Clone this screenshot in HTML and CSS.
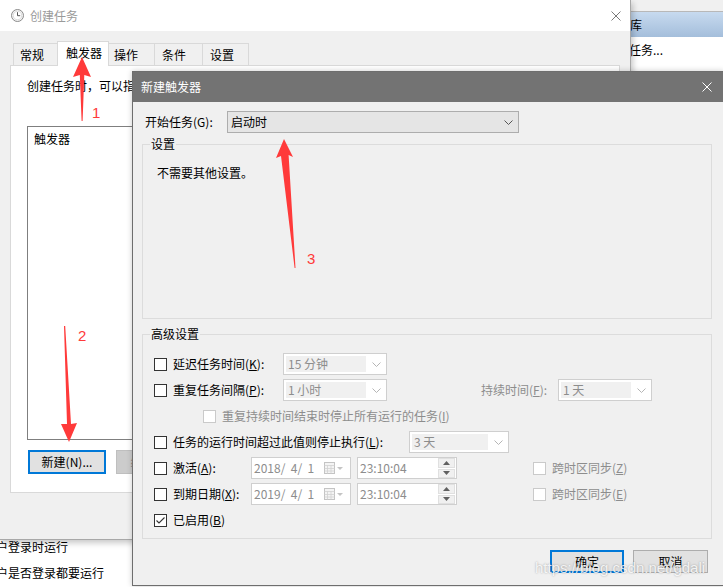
FILE: index.html
```html
<!DOCTYPE html>
<html lang="zh-CN">
<head>
<meta charset="utf-8">
<title>新建触发器</title>
<link rel="stylesheet" href="styles.css">
</head>
<body>
<div class="desk">
  <div class="app-right">
    <div class="app-top"></div>
    <div class="app-head">库</div>
    <div class="app-item">任务...</div>
  </div>
  <div class="app-bottom">
    <div>户登录时运行</div>
    <div>户是否登录都要运行</div>
  </div>

  <div class="win back">
    <div class="titlebar">
      <svg class="clock" width="13" height="13" viewBox="0 0 13 13"><circle cx="6.5" cy="6.5" r="6" fill="#f2f2f2" stroke="#8a8a8a"/><circle cx="6.5" cy="6.5" r="4.2" fill="#fff" stroke="#c9c9c9" stroke-width=".6"/><path d="M6.5 3.2V6.7H9.2" fill="none" stroke="#555" stroke-width="1"/></svg>
      <span class="title">创建任务</span>
      <svg class="close" width="10" height="10" viewBox="0 0 10 10"><path d="M0.5 0.5L9.5 9.5M9.5 0.5L0.5 9.5" stroke="#7a7a7a" stroke-width="1"/></svg>
    </div>
    <div class="tabs">
      <div class="tab first t1">常规</div>
      <div class="tab sel t2">触发器</div>
      <div class="tab t3">操作</div>
      <div class="tab t4">条件</div>
      <div class="tab t5">设置</div>
    </div>
    <div class="panel">
      <div class="intro">创建任务时，可以指定触发任务的条件。</div>
      <div class="list"><div class="list-item">触发器</div></div>
      <div class="btnrow">
        <div class="btn focus">新建(N)...</div>
        <div class="btn disabled">编辑(E)...</div>
      </div>
    </div>
  </div>

  <div class="win front">
    <div class="dtitle">
      <span class="title">新建触发器</span>
      <svg class="close" width="10" height="10" viewBox="0 0 10 10"><path d="M0.5 0.5L9.5 9.5M9.5 0.5L0.5 9.5" stroke="#fff" stroke-width="1"/></svg>
    </div>
    <div class="dbody">
      <div class="startrow">
        <span class="start-lbl">开始任务(G):</span>
        <div class="combo main">
          <span class="val">启动时</span>
          <svg class="chev" width="9" height="5" viewBox="0 0 9 5"><path d="M0.5 0.5L4.5 4.5L8.5 0.5" fill="none" stroke="#555"/></svg>
        </div>
      </div>

      <fieldset class="group g1">
        <legend>设置</legend>
        <div class="note">不需要其他设置。</div>
      </fieldset>

      <fieldset class="group g2">
        <legend>高级设置</legend>
        <div class="rows">
          <div class="row">
            <span class="cb"></span>
            <span class="lbl w1">延迟任务时间(<u>K</u>):</span>
            <div class="combo dis w-104"><span class="val">15 分钟</span><span class="chev-box"><svg width="9" height="5" viewBox="0 0 9 5"><path d="M0.5 0.5L4.5 4.5L8.5 0.5" fill="none" stroke="#b5b5b5"/></svg></span></div>
          </div>
          <div class="row">
            <span class="cb"></span>
            <span class="lbl w1">重复任务间隔(<u>P</u>):</span>
            <div class="combo dis w-104"><span class="val">1 小时</span><span class="chev-box"><svg width="9" height="5" viewBox="0 0 9 5"><path d="M0.5 0.5L4.5 4.5L8.5 0.5" fill="none" stroke="#b5b5b5"/></svg></span></div>
            <span class="lbl gray dur">持续时间(<u>F</u>):</span>
            <div class="combo dis w-94"><span class="val">1 天</span><span class="chev-box"><svg width="9" height="5" viewBox="0 0 9 5"><path d="M0.5 0.5L4.5 4.5L8.5 0.5" fill="none" stroke="#b5b5b5"/></svg></span></div>
          </div>
          <div class="row sub">
            <span class="cb off"></span>
            <span class="gray">重复持续时间结束时停止所有运行的任务(<u>I</u>)</span>
          </div>
          <div class="row">
            <span class="cb"></span>
            <span class="lbl w4">任务的运行时间超过此值则停止执行(<u>L</u>):</span>
            <div class="combo dis w-100"><span class="val">3 天</span><span class="chev-box"><svg width="9" height="5" viewBox="0 0 9 5"><path d="M0.5 0.5L4.5 4.5L8.5 0.5" fill="none" stroke="#b5b5b5"/></svg></span></div>
          </div>
          <div class="row">
            <span class="cb"></span>
            <span class="lbl w5">激活(<u>A</u>):</span>
            <div class="datebox">
              <span class="dval">2018/&nbsp; 4/&nbsp; 1</span>
              <svg class="cal" width="20" height="12" viewBox="0 0 20 12"><rect x="0.5" y="0.5" width="10" height="11" fill="#f4f4f4" stroke="#c4c4c4"/><path d="M0.5 3.5H10.5M0.5 6.5H10.5M0.5 9H10.5M3.5 3.5V11.5M7 3.5V11.5" stroke="#d2d2d2" stroke-width=".8"/><path d="M13 5H19L16 8Z" fill="#c4c4c4"/></svg>
            </div>
            <div class="timebox">
              <span class="dval">23:10:04</span>
              <span class="spin"><span class="sp"><svg width="7" height="4" viewBox="0 0 7 4"><path d="M0 4H7L3.5 0Z" fill="#606060"/></svg></span><span class="sp"><svg width="7" height="4" viewBox="0 0 7 4"><path d="M0 0H7L3.5 4Z" fill="#606060"/></svg></span></span>
            </div>
            <span class="cb off tz"></span>
            <span class="gray">跨时区同步(<u>Z</u>)</span>
          </div>
          <div class="row">
            <span class="cb"></span>
            <span class="lbl w5">到期日期(<u>X</u>):</span>
            <div class="datebox">
              <span class="dval">2019/&nbsp; 4/&nbsp; 1</span>
              <svg class="cal" width="20" height="12" viewBox="0 0 20 12"><rect x="0.5" y="0.5" width="10" height="11" fill="#f4f4f4" stroke="#c4c4c4"/><path d="M0.5 3.5H10.5M0.5 6.5H10.5M0.5 9H10.5M3.5 3.5V11.5M7 3.5V11.5" stroke="#d2d2d2" stroke-width=".8"/><path d="M13 5H19L16 8Z" fill="#c4c4c4"/></svg>
            </div>
            <div class="timebox">
              <span class="dval">23:10:04</span>
              <span class="spin"><span class="sp"><svg width="7" height="4" viewBox="0 0 7 4"><path d="M0 4H7L3.5 0Z" fill="#606060"/></svg></span><span class="sp"><svg width="7" height="4" viewBox="0 0 7 4"><path d="M0 0H7L3.5 4Z" fill="#606060"/></svg></span></span>
            </div>
            <span class="cb off tz"></span>
            <span class="gray">跨时区同步(<u>E</u>)</span>
          </div>
          <div class="row">
            <span class="cb checked"><svg width="11" height="11" viewBox="0 0 11 11"><path d="M1.5 5.5L4 8L9.5 2.5" fill="none" stroke="#333" stroke-width="1.1"/></svg></span>
            <span>已启用(<u>B</u>)</span>
          </div>
        </div>
      </fieldset>

      <div class="dbtns">
        <div class="btn focus ok">确定</div>
        <div class="btn cancel">取消</div>
      </div>
    </div>
  </div>

  <svg class="annot" width="723" height="587" viewBox="0 0 723 587">
    <polygon points="82,57 91,77 84.3,75 82.6,121 81.6,121 79.8,75 73,77" fill="#ff3a3a"/>
    <text x="92" y="118" class="anum">1</text>
    <polygon points="64,326 65.2,326 71,424 77,423 69,442 61,424 67,424" fill="#ff3a3a"/>
    <text x="78" y="341" class="anum">2</text>
    <polygon points="284,139 293,157 288.6,155 295.5,268 294.6,268 281,156 276,158" fill="#ff3a3a"/>
    <text x="307" y="264" class="anum">3</text>
  </svg>
  <div class="watermark">https://blog.csdn.net/gdali</div>
</div>
</body>
</html>
```
FILE: styles.css
```css
* { box-sizing: border-box; }
html, body { margin: 0; padding: 0; }
body {
  width: 723px;
  height: 587px;
  overflow: hidden;
  background: #fff;
  font-family: "Noto Sans CJK SC", "Noto Sans", sans-serif;
  font-size: 12px;
  line-height: 16px;
  color: #000;
}
u { text-decoration: underline; text-underline-offset: 1px; }

.desk { position: relative; width: 723px; height: 587px; overflow: hidden; background: #fff; }

/* background application */
.app-right { position: absolute; left: 600px; top: 0; width: 123px; height: 75px; background: #fff; }
.app-top { height: 12px; background: #f0f0f0; border-bottom: 1px solid #b8b8b8; }
.app-head {
  height: 25px; line-height: 25px; padding-left: 30px;
  background: linear-gradient(#c7daef, #a4bedb);
}
.app-item { padding-left: 29px; margin-top: 5px; }
.app-bottom { position: absolute; left: -4px; top: 534px; line-height: 26px; }

/* windows */
.win { position: absolute; background: #f0f0f0; }
.back {
  left: -1px; top: 0; width: 632px; height: 540px;
  border-right: 1px solid #a8a8a8; border-bottom: 1px solid #a8a8a8;
  box-shadow: 2px 3px 6px rgba(0,0,0,.22);
}
.titlebar {
  height: 31px; background: #fff; display: flex; align-items: center; padding-left: 12px;
}
.titlebar .title { margin-left: 6px; color: #9a9a9a; }
.titlebar .close { margin-left: auto; margin-right: 9px; }

.tabs { height: 34px; display: flex; align-items: flex-end; padding-left: 14px; }
.tab {
  height: 22px; line-height: 21px; padding-left: 6px;
  border: 1px solid #d9d9d9; border-bottom: none; border-left: none;
  background: #f0f0f0;
}
.tab.first { border-left: 1px solid #d9d9d9; }
.tab.sel {
  height: 25px; background: #fff; border-left: 1px solid #d9d9d9;
  margin-left: -1px; margin-bottom: -1px; position: relative; z-index: 1; padding-left: 8px;
}
.t1 { width: 45px; }
.t2 { width: 52px; }
.t3 { width: 46px; padding-left: 5px; }
.t4 { width: 48px; padding-left: 7px; }
.t5 { width: 46px; padding-left: 7px; }

.panel {
  margin-left: 11px; width: 610px; height: 428px;
  background: #fff; border: 1px solid #d9d9d9; padding: 12px 0 0 16px;
}
.list {
  margin-top: 32px; width: 600px; height: 314px;
  border: 1px solid #7f7f7f; padding: 4px 6px;
}
.btnrow { margin-top: 10px; display: flex; padding-left: 1px; }
.btn {
  height: 24px; width: 78px; display: flex; align-items: center; justify-content: center;
  background: #e1e1e1; border: 1px solid #adadad;
}
.btn.focus { border: 2px solid #0078d7; }
.btn.disabled { margin-left: 10px; background: #cccccc; border-color: #bfbfbf; color: #8a8a8a; }

/* front dialog */
.front {
  left: 132px; top: 71px; width: 592px; height: 515px;
  border: 1px solid #6e6e6e;
  box-shadow: 0 0 6px rgba(0,0,0,.2);
}
.dtitle {
  height: 30px; background: #737373; color: #fff;
  display: flex; align-items: center; padding-left: 8px;
}
.dtitle .close { margin-left: auto; margin-right: 11px; }

.dbody { padding: 9px 11px 0 9px; }
.startrow { display: flex; align-items: center; height: 22px; }
.start-lbl { width: 85px; padding-left: 3px; }
.combo { height: 22px; display: flex; align-items: center; }
.combo.main {
  width: 292px; background: #e5e5e5; border: 1px solid #adadad; padding: 0 5px 0 3px;
}
.combo.main .chev { margin-left: auto; }

.group {
  margin: 0; padding: 0; min-width: 0; width: 570px;
  border: 1px solid #dcdcdc;
}
.group legend { margin-left: 7px; padding: 0 1px; line-height: 14px; }
.g1 { margin-top: 4px; height: 182px; }
.g2 { margin-top: 8px; height: 212px; }
.note { padding: 14px 0 0 14px; }

.rows { padding: 10px 0 0 11px; }
.row { display: flex; align-items: center; height: 26px; }
.row.sub { padding-left: 49px; }
.cb {
  width: 13px; height: 13px; flex: none; margin-right: 6px;
  border: 1px solid #333; background: #fff;
  display: flex; align-items: center; justify-content: center;
}
.cb.off { border-color: #cacaca; }
.cb.tz { margin-left: 76px; }
.lbl { flex: none; white-space: nowrap; }
.w1 { width: 110px; }
.w4 { width: 236px; }
.w5 { width: 78px; }
.gray { color: #8d8d8d; }
.dur { margin-left: 94px; width: 77px; }

.combo.dis {
  border: 1px solid #cfcfcf; background: #fff; padding: 2px 0 2px 2px; color: #8d8d8d;
}
.combo.dis .val { height: 16px; flex: 1; background: #f0f0f0; padding-left: 2px; line-height: 16px; }
.chev-box { width: 20px; flex: none; display: flex; justify-content: center; }
.w-104 { width: 104px; }
.w-94 { width: 94px; }
.w-100 { width: 100px; }

.datebox, .timebox {
  width: 100px; height: 22px; border: 1px solid #cfcfcf; background: #fff;
  display: flex; align-items: center; padding-left: 2px; color: #8d8d8d; flex: none;
}
.datebox .cal { margin-left: auto; margin-right: 6px; }
.timebox { margin-left: 6px; }
.spin {
  margin-left: auto; margin-right: 1px; width: 17px; height: 20px;
  display: flex; flex-direction: column; gap: 1px;
}
.sp {
  flex: 1; background: #f0f0f0; border: 1px solid #e0e0e0;
  display: flex; align-items: center; justify-content: center;
}

.dbtns { margin-top: 11px; display: flex; justify-content: flex-end; gap: 9px; padding-right: 4px; }
.dbtns .btn { height: 23px; }
.ok { width: 74px; }
.cancel { width: 75px; }

/* annotations */
.annot { position: absolute; left: 0; top: 0; pointer-events: none; z-index: 5; }
.anum { font-family: "Liberation Sans", sans-serif; font-size: 15px; fill: #ff3a3a; }

.watermark {
  position: absolute; left: 535px; top: 559px; z-index: 6;
  font-family: "Liberation Sans", sans-serif; font-size: 15px; line-height: 18px;
  color: rgba(255,255,255,.85);
  text-shadow: 0 0 2px rgba(0,0,0,.35);
}
```
